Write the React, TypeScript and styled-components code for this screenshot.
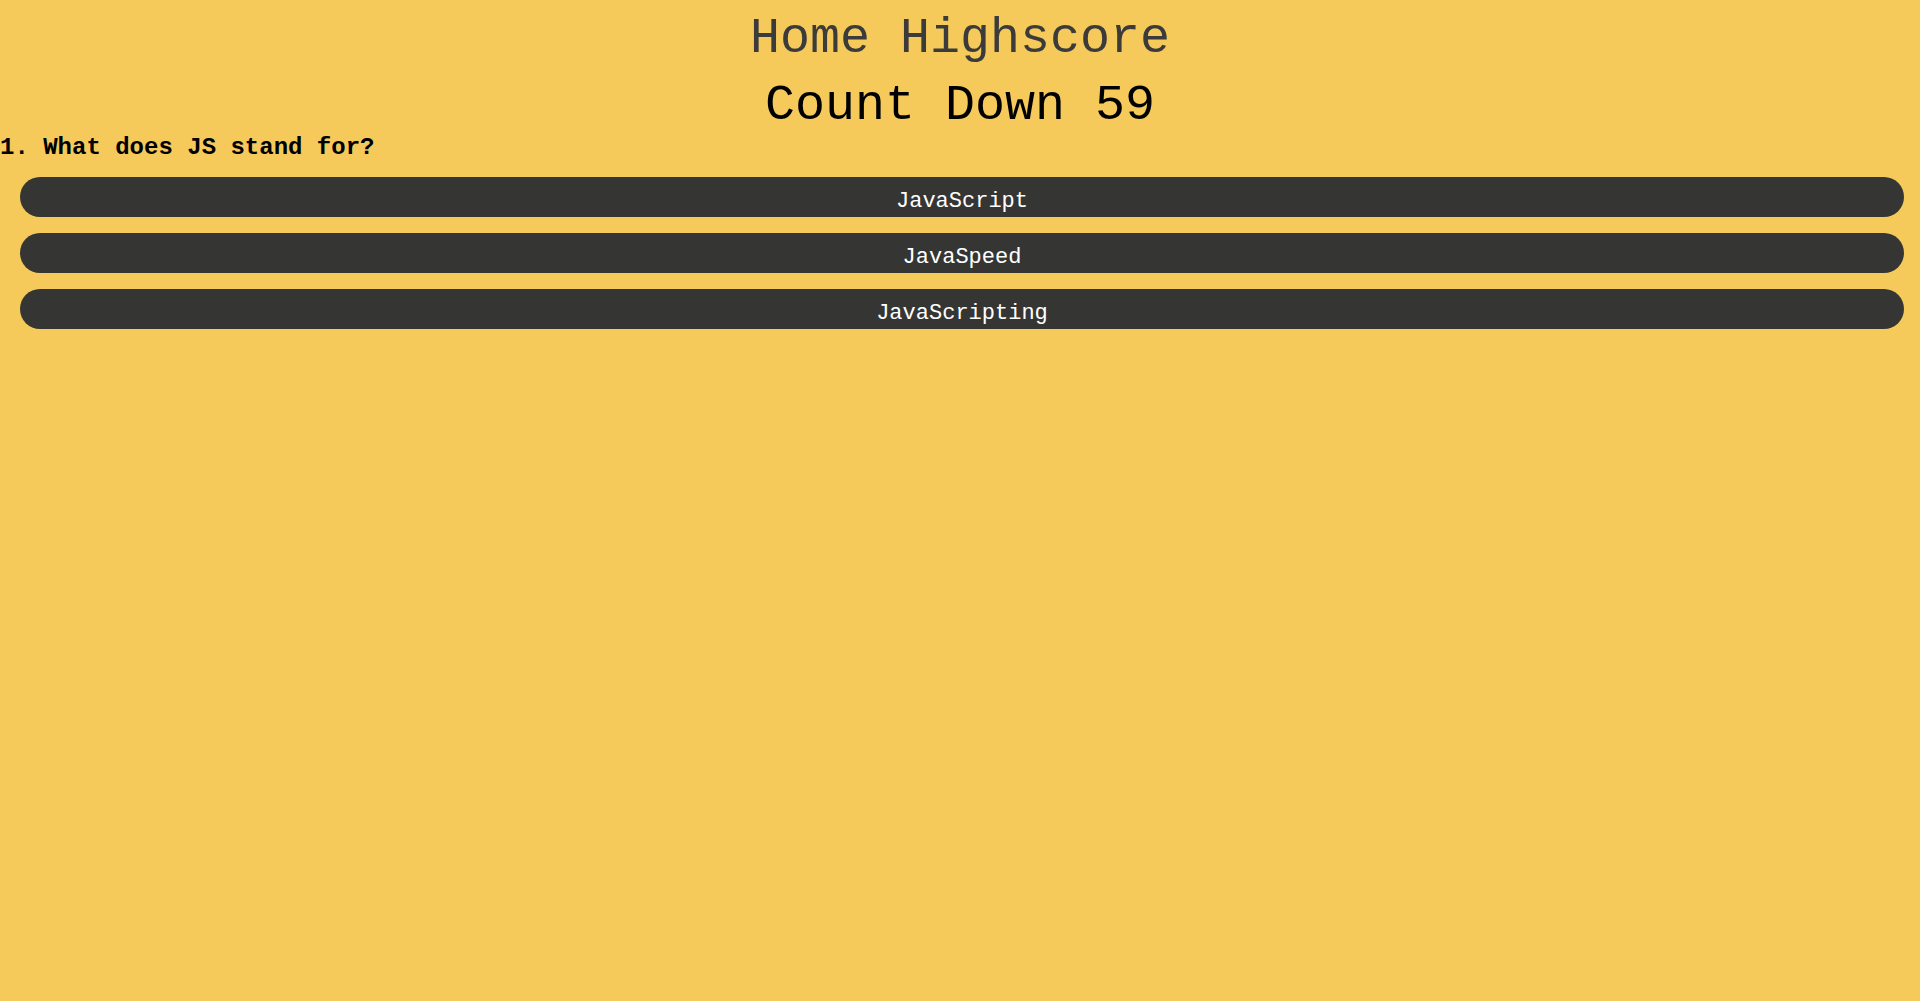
import React from "react";
import styled, { createGlobalStyle } from "styled-components";

const GlobalStyle = createGlobalStyle`
  html, body {
    margin: 0;
    padding: 0;
    background: #f5ca5b;
  }
  body {
    font-family: "Liberation Mono", "Courier New", monospace;
    min-height: 100vh;
  }
`;

const Page = styled.div`
  display: flex;
  flex-direction: column;
  padding-top: 10px;
`;

const Nav = styled.nav`
  display: flex;
  justify-content: center;
  gap: 30px;
  font-size: 50px;
  line-height: normal;
  color: #3b3b3b;
`;

const NavLink = styled.span`
  cursor: pointer;
`;

const Timer = styled.div`
  margin-top: 10px;
  text-align: center;
  font-size: 50px;
  line-height: normal;
  color: #000;
`;

const Question = styled.h2`
  margin: 0 0 16px;
  font-size: 24px;
  line-height: normal;
  font-weight: bold;
  color: #000;
`;

const Answers = styled.div`
  display: flex;
  flex-direction: column;
  gap: 16px;
  margin: 0 16px 0 20px;
`;

const Answer = styled.button`
  box-sizing: border-box;
  height: 40px;
  padding: 12px 0 0;
  border: none;
  border-radius: 20px;
  background: #353634;
  color: #fff;
  font-family: "Liberation Mono", "Courier New", monospace;
  font-size: 22px;
  line-height: normal;
  display: flex;
  justify-content: center;
  align-items: flex-start;
  cursor: pointer;
`;

const answers = ["JavaScript", "JavaSpeed", "JavaScripting"];

export default function App() {
  return (
    <>
      <GlobalStyle />
      <Page>
        <Nav>
          <NavLink>Home</NavLink>
          <NavLink>Highscore</NavLink>
        </Nav>
        <Timer>Count Down 59</Timer>
        <Question>1. What does JS stand for?</Question>
        <Answers>
          {answers.map((a) => (
            <Answer key={a}>{a}</Answer>
          ))}
        </Answers>
      </Page>
    </>
  );
}
